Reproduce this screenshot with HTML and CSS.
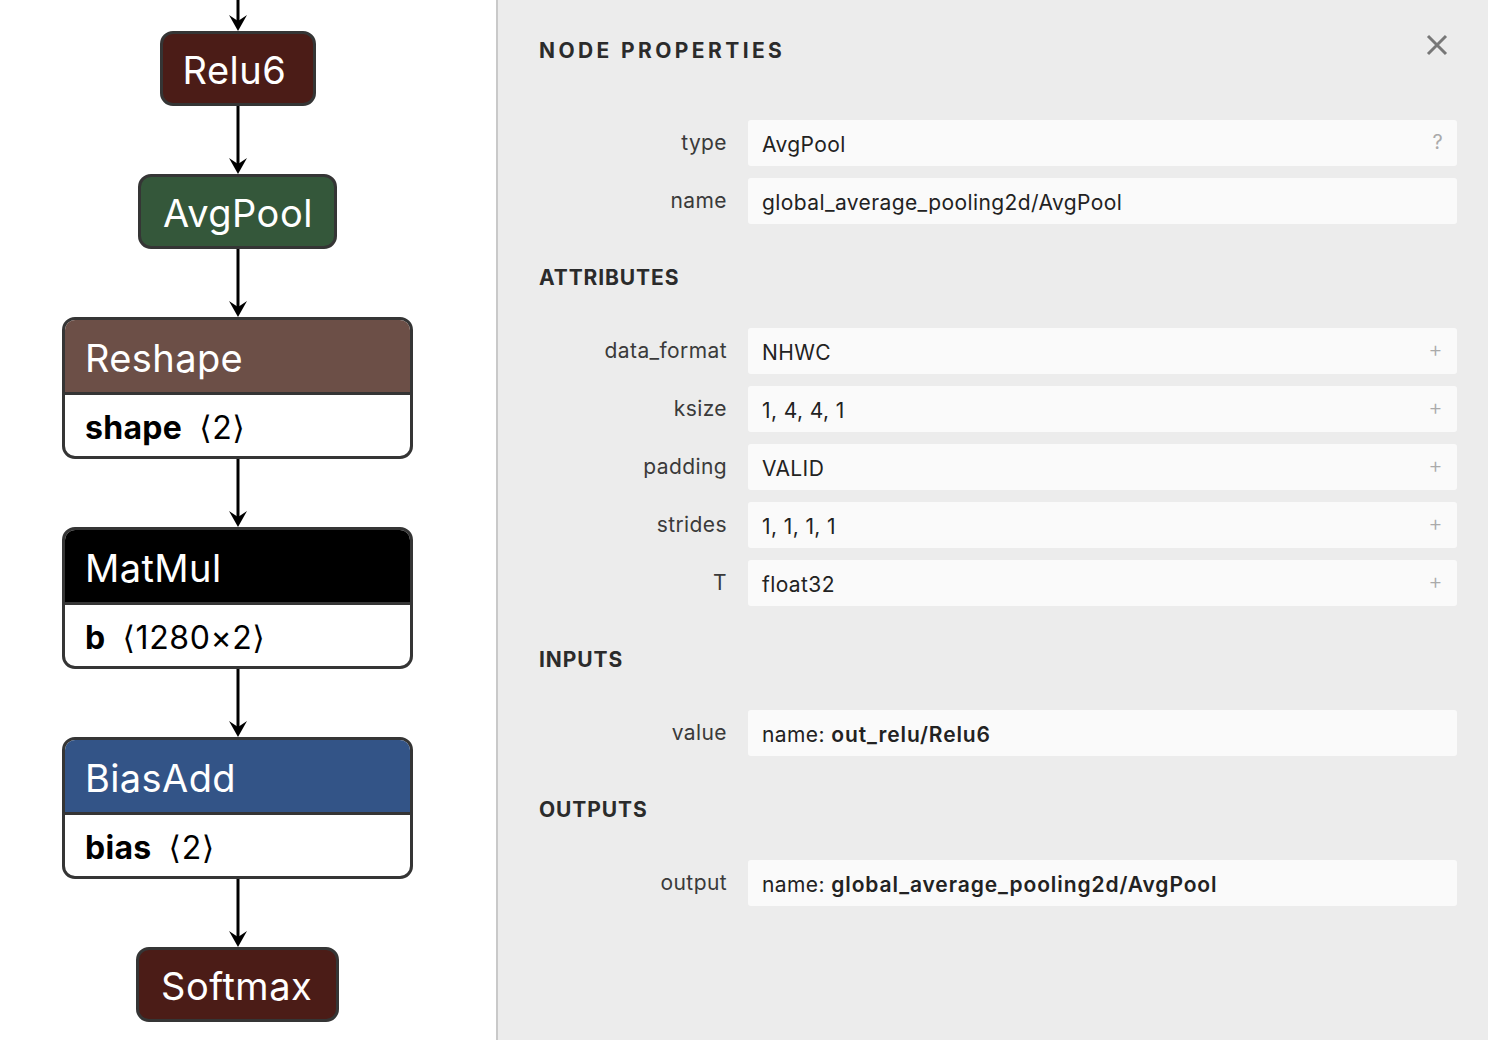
FILE: index.html
```html
<!DOCTYPE html>
<html lang="en">
<head>
<meta charset="utf-8">
<title>Node Properties</title>
<link rel="stylesheet" href="styles.css">
</head>
<body>
<div class="app">
  <div class="graph">
    <div class="edge edge-top">
      <svg viewBox="0 0 20 31" width="20" height="31"><line x1="10" y1="0" x2="10" y2="26" class="edge-line"/><polygon points="10,31 1,15 10,21 19,15" class="edge-head"/></svg>
    </div>
    <div class="node node-simple node-relu node-w-relu">Relu6</div>
    <div class="edge">
      <svg viewBox="0 0 20 68" width="20" height="68"><line x1="10" y1="0" x2="10" y2="63" class="edge-line"/><polygon points="10,68 1,52 10,58 19,52" class="edge-head"/></svg>
    </div>
    <div class="node node-simple node-pool node-w-pool">AvgPool</div>
    <div class="edge">
      <svg viewBox="0 0 20 68" width="20" height="68"><line x1="10" y1="0" x2="10" y2="63" class="edge-line"/><polygon points="10,68 1,52 10,58 19,52" class="edge-head"/></svg>
    </div>
    <div class="node node-multi">
      <div class="node-header node-shape">Reshape</div>
      <div class="node-body"><span><b>shape</b><span class="dim">⟨2⟩</span></span></div>
    </div>
    <div class="edge">
      <svg viewBox="0 0 20 68" width="20" height="68"><line x1="10" y1="0" x2="10" y2="63" class="edge-line"/><polygon points="10,68 1,52 10,58 19,52" class="edge-head"/></svg>
    </div>
    <div class="node node-multi">
      <div class="node-header node-layer">MatMul</div>
      <div class="node-body"><span><b>b</b><span class="dim">⟨1280×2⟩</span></span></div>
    </div>
    <div class="edge">
      <svg viewBox="0 0 20 68" width="20" height="68"><line x1="10" y1="0" x2="10" y2="63" class="edge-line"/><polygon points="10,68 1,52 10,58 19,52" class="edge-head"/></svg>
    </div>
    <div class="node node-multi">
      <div class="node-header node-bias">BiasAdd</div>
      <div class="node-body"><span><b>bias</b><span class="dim">⟨2⟩</span></span></div>
    </div>
    <div class="edge">
      <svg viewBox="0 0 20 68" width="20" height="68"><line x1="10" y1="0" x2="10" y2="63" class="edge-line"/><polygon points="10,68 1,52 10,58 19,52" class="edge-head"/></svg>
    </div>
    <div class="node node-simple node-relu node-w-soft">Softmax</div>
  </div>

  <aside class="panel">
    <div class="panel-head">
      <h1 class="panel-title">NODE PROPERTIES</h1>
      <button class="close" aria-label="Close">
        <svg viewBox="0 0 22 22" width="22" height="22"><path d="M2 2 L20 20 M20 2 L2 20" class="close-x"/></svg>
      </button>
    </div>

    <div class="rows">
      <div class="row"><div class="label">type</div><div class="value"><span>AvgPool</span><span class="action">?</span></div></div>
      <div class="row"><div class="label">name</div><div class="value"><span>global_average_pooling2d/AvgPool</span></div></div>
    </div>

    <h2 class="section">ATTRIBUTES</h2>
    <div class="rows">
      <div class="row"><div class="label">data_format</div><div class="value"><span>NHWC</span><span class="action plus">+</span></div></div>
      <div class="row"><div class="label">ksize</div><div class="value"><span>1, 4, 4, 1</span><span class="action plus">+</span></div></div>
      <div class="row"><div class="label">padding</div><div class="value"><span>VALID</span><span class="action plus">+</span></div></div>
      <div class="row"><div class="label">strides</div><div class="value"><span>1, 1, 1, 1</span><span class="action plus">+</span></div></div>
      <div class="row"><div class="label">T</div><div class="value"><span>float32</span><span class="action plus">+</span></div></div>
    </div>

    <h2 class="section">INPUTS</h2>
    <div class="rows">
      <div class="row"><div class="label">value</div><div class="value"><span>name: <b>out_relu/Relu6</b></span></div></div>
    </div>

    <h2 class="section">OUTPUTS</h2>
    <div class="rows">
      <div class="row"><div class="label">output</div><div class="value"><span>name: <b>global_average_pooling2d/AvgPool</b></span></div></div>
    </div>
  </aside>
</div>
</body>
</html>
```
FILE: styles.css
```css
html, body {
  margin: 0;
  padding: 0;
  height: 100%;
}
body {
  font-family: Inter, "Noto Sans", "DejaVu Sans", sans-serif;
  background: #ffffff;
  color: #222;
  overflow: hidden;
}
.app {
  display: flex;
  height: 1040px;
}

/* ---------- graph ---------- */
.graph {
  width: 496px;
  flex: none;
  box-sizing: border-box;
  padding-right: 21px;
  display: flex;
  flex-direction: column;
  align-items: center;
  background: #fff;
}
.edge {
  height: 68px;
  width: 20px;
  flex: none;
}
.edge svg { display: block; }
.edge-top { height: 31px; }
.edge-line {
  stroke: #000;
  stroke-width: 3;
}
.edge-head { fill: #000; }

.node {
  box-sizing: border-box;
  border: 3px solid #353535;
  border-radius: 13px;
  overflow: hidden;
  color: #fff;
  flex: none;
}
.node-simple {
  height: 75px;
  display: flex;
  align-items: center;
  justify-content: flex-start;
  font-size: 38px;
  letter-spacing: 0.5px;
  padding: 3px 0 0 20px;
}
.node-w-relu { width: 156px; }
.node-w-pool { width: 199px; }
.node-w-soft { width: 203px; padding-left: 22px; }
.node-w-pool { padding-left: 22px; }
.node-relu { background: #4b1c17; }
.node-pool { background: #34573a; }

.node-multi {
  width: 351px;
  background: #fff;
}
.node-header {
  height: 72px;
  display: flex;
  align-items: center;
  padding: 4px 20px 0;
  box-sizing: border-box;
  font-size: 38px;
  letter-spacing: 0.4px;
  color: #fff;
}
.node-shape { background: #6c4f47; }
.node-layer { background: #000; }
.node-bias { background: #335487; }
.node-body {
  height: 64px;
  box-sizing: border-box;
  border-top: 3px solid #353535;
  display: flex;
  align-items: center;
  padding: 3px 20px 0;
  font-size: 32px;
  color: #000;
  white-space: pre;
}
.node-body b { font-weight: 700; letter-spacing: 0.3px; }
.dim { font-weight: 400; letter-spacing: 0.6px; margin-left: 17px; }

/* ---------- panel ---------- */
.panel {
  flex: 1;
  background: #ececec;
  border-left: 2px solid #c9c9c9;
  box-sizing: border-box;
  padding: 39px 31px 0 41px;
  color: #333;
}
.panel-head {
  display: flex;
  align-items: center;
  justify-content: space-between;
  height: 24px;
  margin-bottom: 57px;
}
.panel-title {
  margin: 0;
  font-size: 21px;
  line-height: 24px;
  font-weight: 700;
  letter-spacing: 3.4px;
  color: #2b2b2b;
}
.close {
  border: 0;
  background: none;
  padding: 0;
  margin-right: 9px;
  margin-top: -13px;
  width: 22px;
  height: 22px;
  cursor: pointer;
}
.close svg { display: block; }
.close-x {
  stroke: #777;
  stroke-width: 3;
  fill: none;
}

.rows {
  display: flex;
  flex-direction: column;
  gap: 12px;
}
.row {
  display: flex;
  align-items: stretch;
  gap: 21px;
}
.label {
  width: 188px;
  flex: none;
  text-align: right;
  font-size: 21px;
  letter-spacing: 0.4px;
  line-height: 46px;
  color: #3a3a3a;
}
.value {
  flex: 1;
  height: 46px;
  background: #fafafa;
  border-radius: 3px;
  display: flex;
  align-items: center;
  padding: 3px 14px 0;
  box-sizing: border-box;
  font-size: 21px;
  letter-spacing: 0.4px;
  color: #222;
}
.value b { font-weight: 600; color: #222; letter-spacing: 0.9px; }
.action {
  margin-left: auto;
  color: #aaa;
  font-size: 20px;
  margin-top: -6px;
}
.plus {
  font-size: 22px;
  font-weight: 300;
  margin-top: -7px;
}
.section {
  margin: 40px 0 38px;
  padding-top: 2px;
  font-size: 21px;
  line-height: 24px;
  font-weight: 700;
  letter-spacing: 0.9px;
  color: #2b2b2b;
}
```
